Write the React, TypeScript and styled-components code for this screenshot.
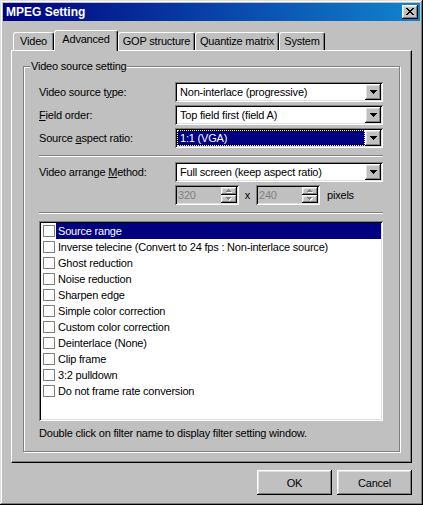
import React from 'react';
import styled, { createGlobalStyle } from 'styled-components';

const FACE = '#c0c0c0';
const LIGHT = '#dfdfdf';
const SHADOW = '#808080';
const DARK = '#000000';
const NAVY = '#000080';
const FONT = `"Liberation Sans", Arial, sans-serif`;

const GlobalStyle = createGlobalStyle`
  html, body { margin: 0; padding: 0; background: ${FACE}; }
  body { font-family: ${FONT}; font-size: 11px; letter-spacing: -0.2px; color: #000; }
  * { box-sizing: border-box; }
`;

const raised = `
  box-shadow: inset -1px -1px ${DARK}, inset 1px 1px #fff, inset -2px -2px ${SHADOW}, inset 2px 2px ${LIGHT};
`;
const sunken = `
  box-shadow: inset 1px 1px ${SHADOW}, inset -1px -1px #fff, inset 2px 2px ${DARK}, inset -2px -2px ${LIGHT};
`;

const Window = styled.div`
  width: 423px;
  height: 505px;
  padding: 3px;
  background: ${FACE};
  display: flex;
  flex-direction: column;
  box-shadow: inset -1px -1px ${DARK}, inset 1px 1px ${LIGHT}, inset -2px -2px ${SHADOW}, inset 2px 2px #fff;
`;

const TitleBar = styled.div`
  height: 18px;
  flex: none;
  display: flex;
  align-items: center;
  justify-content: space-between;
  padding: 0 2px 0 3px;
  background: linear-gradient(to right, ${NAVY}, #1084d0);
`;

const TitleText = styled.span`
  color: #fff;
  font-weight: bold;
  font-size: 12px;
  letter-spacing: 0;
`;

const CloseButton = styled.div`
  width: 16px;
  height: 14px;
  background: ${FACE};
  ${raised}
  display: flex;
  align-items: center;
  justify-content: center;
  padding-bottom: 1px;
`;

const Body = styled.div`
  flex: 1;
  display: flex;
  flex-direction: column;
  padding: 9px 8px 7px 8px;
`;

const TabStrip = styled.div`
  height: 20px;
  display: flex;
  align-items: flex-end;
  padding-left: 2px;
`;

const Tab = styled.div<{ $w: number; $active?: boolean }>`
  width: ${(p) => p.$w}px;
  height: ${(p) => (p.$active ? 21 : 18)}px;
  margin-bottom: ${(p) => (p.$active ? -1 : 0)}px;
  position: relative;
  z-index: ${(p) => (p.$active ? 1 : 0)};
  background: ${FACE};
  border-top: 1px solid #fff;
  border-left: 1px solid #fff;
  border-right: 1px solid ${DARK};
  border-radius: 3px 3px 0 0;
  box-shadow: inset -1px 0 ${SHADOW};
  display: flex;
  justify-content: center;
  padding-top: ${(p) => (p.$active ? 2 : 2)}px;
  line-height: 13px;
  white-space: nowrap;
`;

const Panel = styled.div`
  height: 413px;
  flex: none;
  background: ${FACE};
  border-top: 1px solid #fff;
  border-left: 1px solid #fff;
  border-right: 1px solid ${DARK};
  border-bottom: 1px solid ${DARK};
  box-shadow: inset -1px -1px ${SHADOW};
  padding: 9px 11px 0 11px;
`;

const Group = styled.fieldset`
  margin: 0;
  min-width: 0;
  padding: 9px 16px 11px 15px;
  border: 1px solid ${SHADOW};
  box-shadow: inset 1px 1px #fff, 1px 1px #fff;
  display: flex;
  flex-direction: column;
`;

const GroupLegend = styled.legend`
  margin-left: -9px;
  padding: 0 1px;
  line-height: 13px;
  background: ${FACE};
`;

const FormGrid = styled.div`
  display: grid;
  grid-template-columns: 136px 208px;
  row-gap: 3px;
  align-items: center;
`;

const Label = styled.label`
  line-height: 13px;
  white-space: nowrap;
`;

const Separator = styled.div<{ $top: number; $bottom: number }>`
  height: 2px;
  margin: ${(p) => p.$top}px 0 ${(p) => p.$bottom}px;
  border-top: 1px solid ${SHADOW};
  border-bottom: 1px solid #fff;
`;

const Combo = styled.div`
  height: 20px;
  display: flex;
  padding: 2px;
  background: #fff;
  ${sunken}
`;

const ComboField = styled.div<{ $selected?: boolean }>`
  flex: 1;
  display: flex;
  align-items: center;
  padding-left: 2px;
  white-space: nowrap;
  overflow: hidden;
  background: ${(p) => (p.$selected ? NAVY : '#fff')};
  color: ${(p) => (p.$selected ? '#fff' : '#000')};
  border: 1px dotted ${(p) => (p.$selected ? '#ffff80' : 'transparent')};
`;

const DropButton = styled.div`
  width: 16px;
  height: 16px;
  flex: none;
  background: ${FACE};
  ${raised}
  display: flex;
  align-items: center;
  justify-content: center;
`;

const SpinRow = styled.div`
  grid-column: 2;
  height: 20px;
  display: flex;
  align-items: center;
`;

const SpinBox = styled.div`
  width: 64px;
  height: 20px;
  display: flex;
  padding: 2px;
  background: ${FACE};
  ${sunken}
`;

const SpinValue = styled.div`
  flex: 1;
  color: ${SHADOW};
  display: flex;
  align-items: center;
  padding-left: 1px;
`;

const SpinButtons = styled.div`
  width: 16px;
  display: flex;
  flex-direction: column;
`;

const SpinButton = styled.div`
  flex: 1;
  background: ${FACE};
  ${raised}
  display: flex;
  align-items: center;
  justify-content: center;
`;

const Times = styled.span`
  width: 17px;
  text-align: center;
`;

const Unit = styled.span`
  margin-left: 7px;
`;

const ListBox = styled.div`
  height: 200px;
  width: 344px;
  margin-top: 7px;
  padding: 2px;
  background: #fff;
  ${sunken}
`;

const ListRow = styled.div`
  height: 16px;
  display: flex;
  align-items: center;
  padding-left: 2px;
`;

const CheckBox = styled.span`
  width: 12px;
  height: 12px;
  flex: none;
  border: 1px solid ${SHADOW};
  background: #fff;
`;

const ItemText = styled.span<{ $selected?: boolean }>`
  margin-left: 1px;
  padding: 0 2px;
  height: 16px;
  line-height: 16px;
  flex: 1;
  white-space: nowrap;
  background: ${(p) => (p.$selected ? NAVY : 'transparent')};
  color: ${(p) => (p.$selected ? '#fff' : '#000')};
`;

const Note = styled.div`
  margin-top: 6px;
  line-height: 13px;
`;

const Footer = styled.div`
  margin-top: 7px;
  display: flex;
  justify-content: flex-end;
  gap: 5px;
`;

const PushButton = styled.div`
  width: 75px;
  height: 25px;
  background: ${FACE};
  ${raised}
  display: flex;
  align-items: center;
  justify-content: center;
`;

const CloseGlyph = () => (
  <svg width="8" height="7" viewBox="0 0 8 7" shapeRendering="crispEdges">
    <path
      d="M0 0h2v1h-2z M6 0h2v1h-2z M1 1h2v1h-2z M5 1h2v1h-2z M2 2h4v1h-4z M3 3h2v1h-2z M2 4h4v1h-4z M1 5h2v1h-2z M5 5h2v1h-2z M0 6h2v1h-2z M6 6h2v1h-2z"
      fill="#000"
    />
  </svg>
);

const DownArrow = () => (
  <svg width="7" height="4" viewBox="0 0 7 4" shapeRendering="crispEdges">
    <path d="M0 0h7v1h-7z M1 1h5v1h-5z M2 2h3v1h-3z M3 3h1v1h-1z" fill="#000" />
  </svg>
);

const SmallArrow = ({ up }: { up?: boolean }) => {
  const d = up
    ? 'M2 0h1v1h-1z M1 1h3v1h-3z M0 2h5v1h-5z'
    : 'M0 0h5v1h-5z M1 1h3v1h-3z M2 2h1v1h-1z';
  return (
    <svg width="6" height="4" viewBox="0 0 6 4" shapeRendering="crispEdges">
      <path d={d} fill="#fff" transform="translate(1 1)" />
      <path d={d} fill={SHADOW} />
    </svg>
  );
};

const ComboBox = ({ value, selected }: { value: string; selected?: boolean }) => (
  <Combo>
    <ComboField $selected={selected}>{value}</ComboField>
    <DropButton>
      <DownArrow />
    </DropButton>
  </Combo>
);

const Spin = ({ value }: { value: string }) => (
  <SpinBox>
    <SpinValue>{value}</SpinValue>
    <SpinButtons>
      <SpinButton>
        <SmallArrow up />
      </SpinButton>
      <SpinButton>
        <SmallArrow />
      </SpinButton>
    </SpinButtons>
  </SpinBox>
);

const tabs = [
  { label: 'Video', w: 41 },
  { label: 'Advanced', w: 64, active: true },
  { label: 'GOP structure', w: 77 },
  { label: 'Quantize matrix', w: 84 },
  { label: 'System', w: 46 },
];

const filters = [
  'Source range',
  'Inverse telecine (Convert to 24 fps : Non-interlace source)',
  'Ghost reduction',
  'Noise reduction',
  'Sharpen edge',
  'Simple color correction',
  'Custom color correction',
  'Deinterlace (None)',
  'Clip frame',
  '3:2 pulldown',
  'Do not frame rate conversion',
];

export default function App() {
  return (
    <>
      <GlobalStyle />
      <Window>
        <TitleBar>
          <TitleText>MPEG Setting</TitleText>
          <CloseButton>
            <CloseGlyph />
          </CloseButton>
        </TitleBar>
        <Body>
          <TabStrip>
            {tabs.map((t) => (
              <Tab key={t.label} $w={t.w} $active={t.active}>
                {t.label}
              </Tab>
            ))}
          </TabStrip>
          <Panel>
            <Group>
              <GroupLegend>Video source setting</GroupLegend>
              <FormGrid>
                <Label>
                  Video source t<u>y</u>pe:
                </Label>
                <ComboBox value="Non-interlace (progressive)" />
                <Label>
                  <u>F</u>ield order:
                </Label>
                <ComboBox value="Top field first (field A)" />
                <Label>
                  Source <u>a</u>spect ratio:
                </Label>
                <ComboBox value="1:1 (VGA)" selected />
              </FormGrid>
              <Separator $top={7} $bottom={5} />
              <FormGrid>
                <Label>
                  Video arrange <u>M</u>ethod:
                </Label>
                <ComboBox value="Full screen (keep aspect ratio)" />
                <SpinRow>
                  <Spin value="320" />
                  <Times>x</Times>
                  <Spin value="240" />
                  <Unit>pixels</Unit>
                </SpinRow>
              </FormGrid>
              <Separator $top={7} $bottom={0} />
              <ListBox>
                {filters.map((f, i) => (
                  <ListRow key={f}>
                    <CheckBox />
                    <ItemText $selected={i === 0}>{f}</ItemText>
                  </ListRow>
                ))}
              </ListBox>
              <Note>Double click on filter name to display filter setting window.</Note>
            </Group>
          </Panel>
          <Footer>
            <PushButton>OK</PushButton>
            <PushButton>Cancel</PushButton>
          </Footer>
        </Body>
      </Window>
    </>
  );
}
